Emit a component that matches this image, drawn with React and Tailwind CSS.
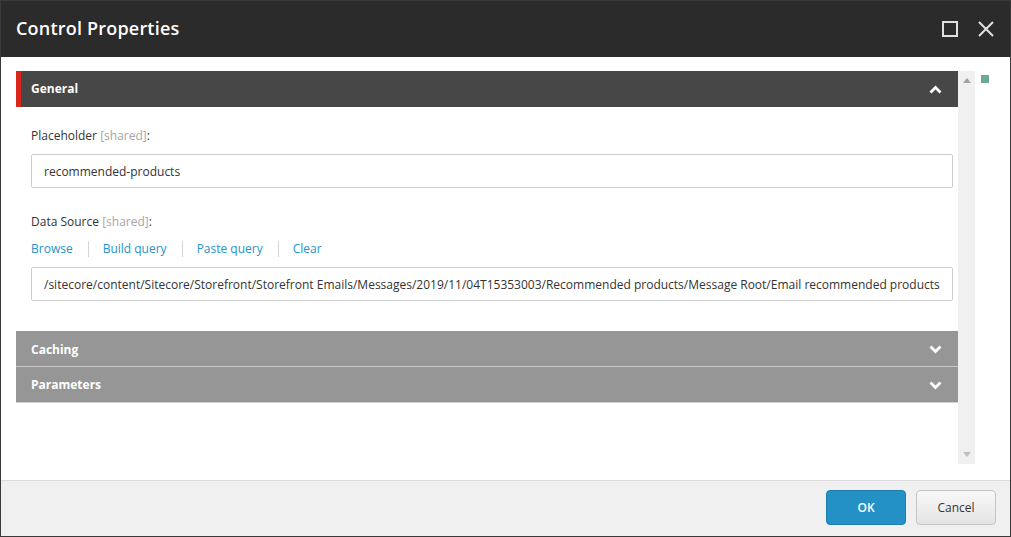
import React from 'react'

const font = { fontFamily: '"Open Sans", "Liberation Sans", sans-serif' }

const Chevron = ({ up }) => (
    <svg width="13" height="9" viewBox="0 0 13 9" className="block">
        <path d={up ? 'M1.5 7.5 L6.5 2.5 L11.5 7.5' : 'M1.5 1.5 L6.5 6.5 L11.5 1.5'} fill="none" stroke="#fff" strokeWidth="2.8" />
    </svg>
)

const Field = ({ label }) => (
    <div className="h-[17px] leading-[17px] text-[12px] text-[#333]">
        {label} <span className="text-[#a6a6a6]">[shared]</span>:
    </div>
)

const Input = ({ value }) => (
    <div className="h-[34px] border border-[#ccc] rounded-[2px] flex items-center pt-[2px] px-[12px] text-[12px] text-[#333] whitespace-nowrap overflow-hidden">
        {value}
    </div>
)

const links = ['Browse', 'Build query', 'Paste query', 'Clear']

export default function App() {
    return (
        <div style={font} className="w-[1011px] h-[537px] border border-[#3a3a3a] flex flex-col bg-white overflow-hidden">
            <div className="h-[56px] shrink-0 bg-[#2b2b2b] flex items-center justify-between pl-[15px] pr-[16px]">
                <div className="text-[18px] font-semibold tracking-[0.2px] text-white leading-none -mt-[2px]">Control Properties</div>
                <div className="flex items-center gap-[20px]">
                    <svg width="16" height="16" viewBox="0 0 16 16">
                        <rect x="1" y="1" width="14" height="14" fill="none" stroke="#e0e0e0" strokeWidth="2" />
                    </svg>
                    <svg width="16" height="16" viewBox="0 0 16 16">
                        <path d="M1 1 L15 15 M15 1 L1 15" stroke="#e0e0e0" strokeWidth="2" />
                    </svg>
                </div>
            </div>

            <div className="flex-1 flex pl-[15px] pt-[14px] pb-[16px]">
                <div className="w-[942px]">
                    <div className="h-[36px] bg-[#474747] border-l-[5px] border-[#d9271c] flex items-center justify-between pl-[10px] pr-[16px]">
                        <span className="text-[12px] font-bold text-white">General</span>
                        <Chevron up />
                    </div>
                    <div className="pl-[15px] pr-[5px] pt-[20px] pb-[30px]">
                        <Field label="Placeholder" />
                        <div className="mt-[10px]">
                            <Input value="recommended-products" />
                        </div>
                        <div className="mt-[25px]">
                            <Field label="Data Source" />
                        </div>
                        <div className="mt-[10px] flex items-center h-[17px] text-[12px] text-[#2593c8]">
                            {links.map((l, i) => (
                                <span key={l} className={i === 0 ? 'pr-[15px]' : 'pl-[14px] pr-[15px] border-l border-[#d4d4d4] leading-[16px]'}>{l}</span>
                            ))}
                        </div>
                        <div className="mt-[10px]">
                            <Input value="/sitecore/content/Sitecore/Storefront/Storefront Emails/Messages/2019/11/04T15353003/Recommended products/Message Root/Email recommended products" />
                        </div>
                    </div>
                    <div className="h-[36px] bg-[#969696] flex items-center justify-between pl-[15px] pr-[16px] pt-[2px] border-b border-[#c8c8c8]">
                        <span className="text-[12px] font-bold text-white">Caching</span>
                        <Chevron />
                    </div>
                    <div className="h-[36px] bg-[#969696] flex items-center justify-between pl-[15px] pr-[16px] pt-[1px] border-b border-[#d0d0d0]">
                        <span className="text-[12px] font-bold text-white">Parameters</span>
                        <Chevron />
                    </div>
                </div>
                <div className="w-[17px] bg-[#f0f0f0] flex flex-col items-center justify-between py-[7px]">
                    <svg width="8" height="5" viewBox="0 0 8 5"><path d="M0 5 L4 0 L8 5 Z" fill="#a3a3a3" /></svg>
                    <svg width="8" height="5" viewBox="0 0 8 5"><path d="M0 0 L4 5 L8 0 Z" fill="#c0c0c0" /></svg>
                </div>
                <div className="pl-[6px] pt-[4px]">
                    <div className="w-[8px] h-[8px] bg-[#6ea898]" />
                </div>
            </div>

            <div className="h-[56px] shrink-0 bg-[#f0f0f0] border-t border-[#dcdcdc] flex items-center justify-end gap-[10px] pr-[14px] pb-[2px]">
                <button className="w-[80px] h-[35px] rounded-[4px] bg-[#2391c5] border border-[#1c7fae] text-white text-[12px] font-semibold">OK</button>
                <button className="w-[80px] h-[35px] rounded-[4px] bg-gradient-to-b from-[#f8f8f8] to-[#e4e4e4] border border-[#c4c4c4] text-[#333] text-[12px]">Cancel</button>
            </div>
        </div>
    )
}
